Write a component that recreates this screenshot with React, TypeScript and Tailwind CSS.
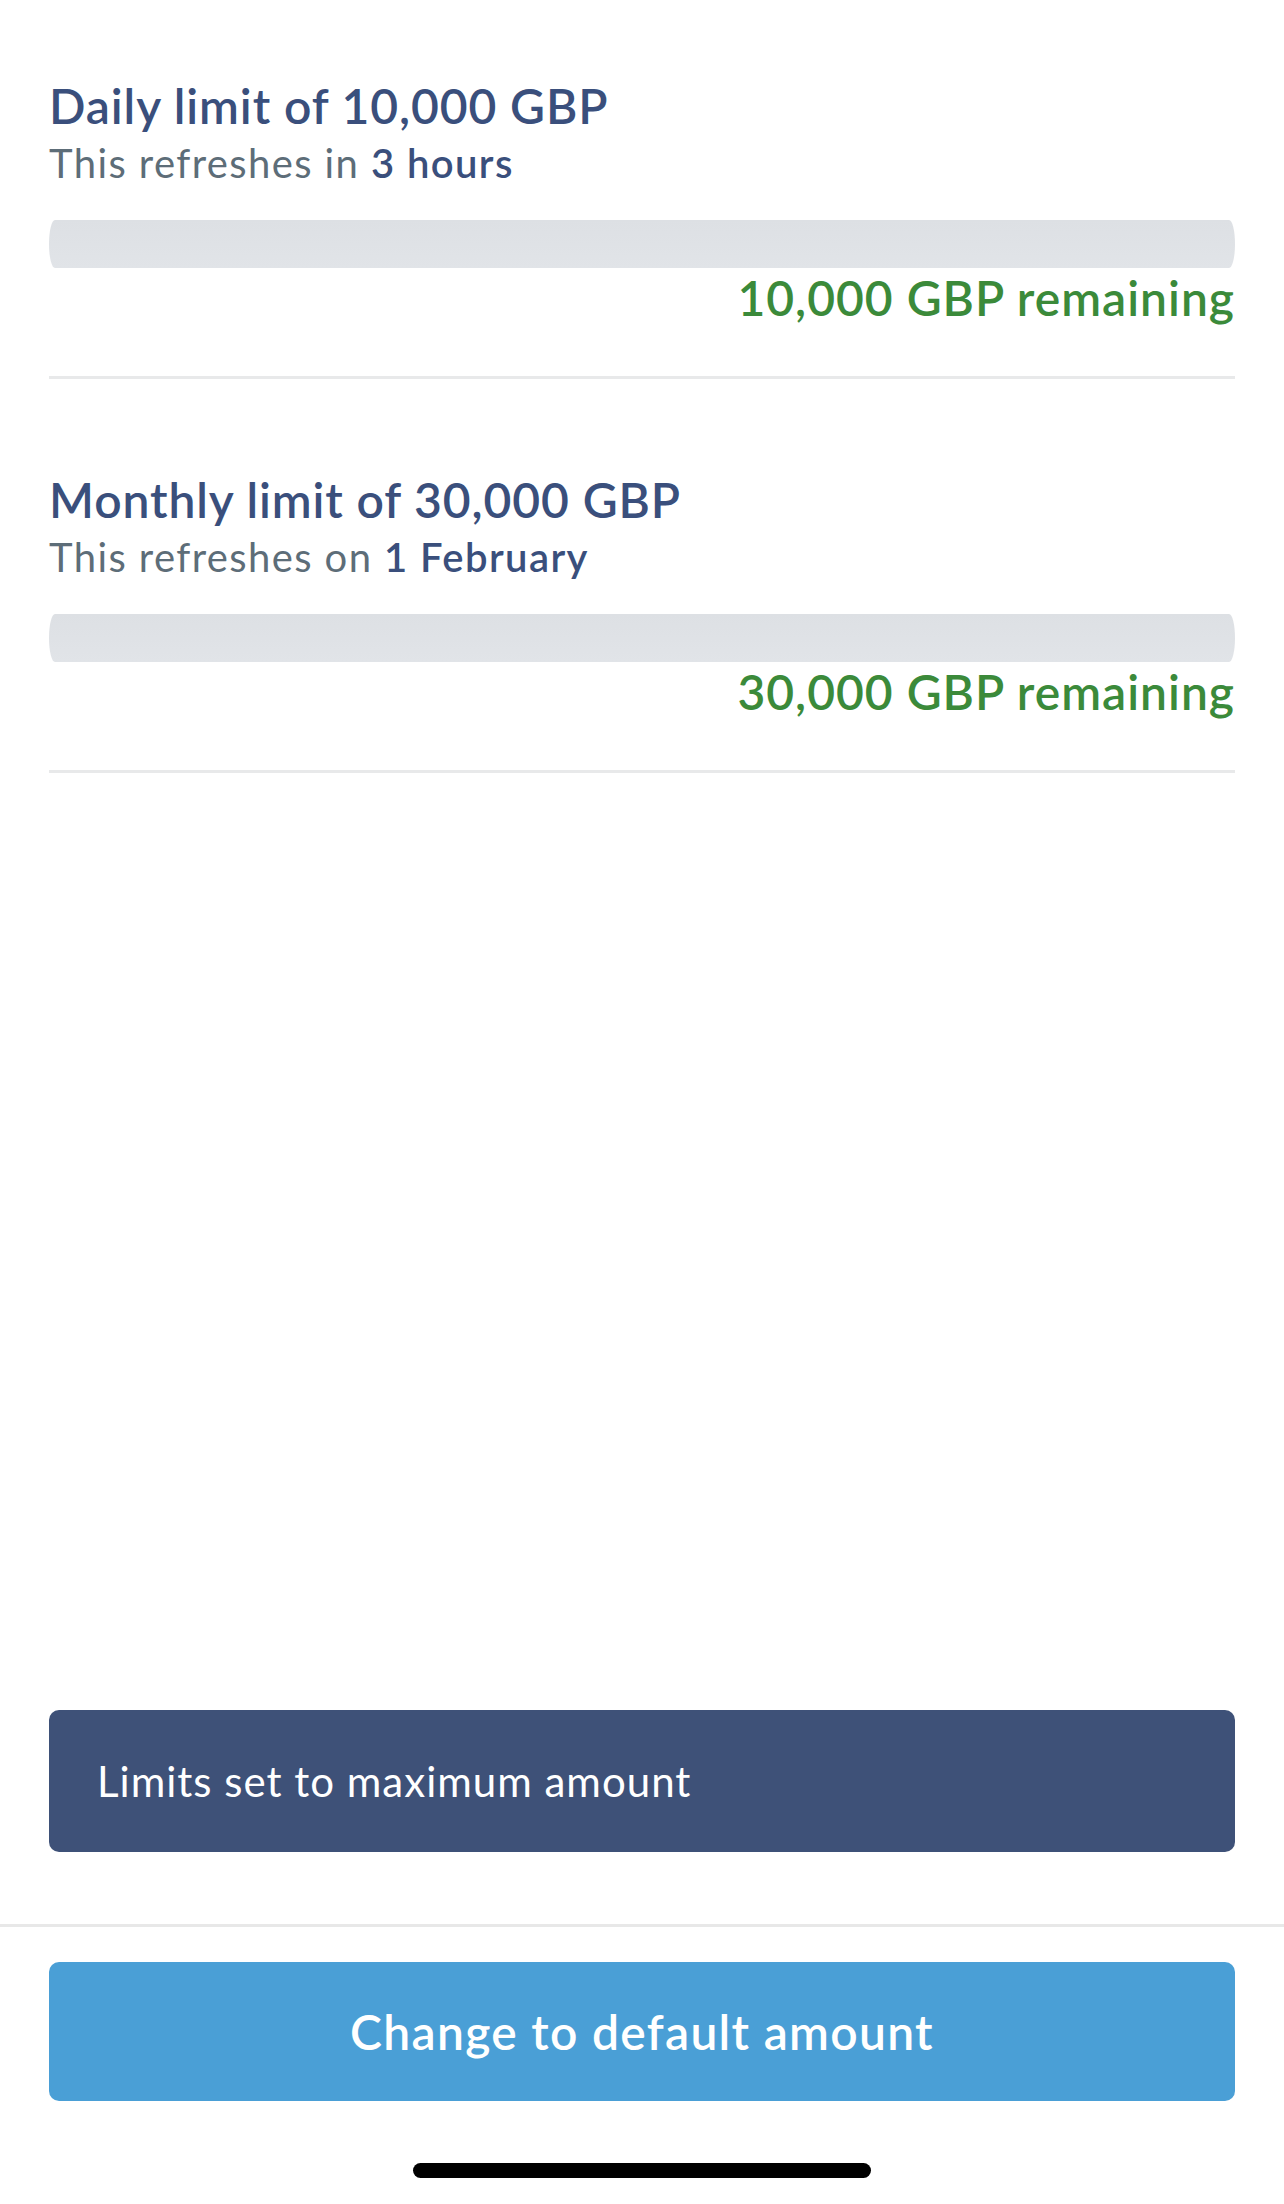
const limits = [
  {
    title: 'Daily limit of 10,000 GBP',
    refreshLabel: 'This refreshes in',
    refreshValue: '3 hours',
    remaining: '10,000 GBP remaining',
    used: 0,
    top: 'pt-[78px]',
  },
  {
    title: 'Monthly limit of 30,000 GBP',
    refreshLabel: 'This refreshes on',
    refreshValue: '1 February',
    remaining: '30,000 GBP remaining',
    used: 0,
    top: 'pt-[93px]',
  },
];

const LimitSection = ({ item }: { item: (typeof limits)[number] }) => (
  <div className={`${item.top} border-b-[3px] border-[#e8e9ea]`}>
    <h2 className="text-[48px] leading-[56px] font-semibold tracking-[0.9px] text-[#3a4f7c]">{item.title}</h2>
    <p className="mt-[6px] text-[40px] leading-[46px] tracking-[1.4px] text-[#5d6d78]">
      {item.refreshLabel} <span className="font-semibold text-[#3a4f7c]">{item.refreshValue}</span>
    </p>
    <div className="mt-[34px] h-[48px] rounded-[6px_/_24px] bg-gradient-to-b from-[#dde0e4] to-[#e1e4e8] overflow-hidden">
      <div className="h-full bg-[#3b8a3a]" style={{ width: `${item.used}%` }} />
    </div>
    <div className="mt-[2px] mb-[50px] text-right text-[48px] leading-[56px] font-semibold tracking-[1px] text-[#3b8a3a]">
      {item.remaining}
    </div>
  </div>
);

export default function App() {
  return (
    <div
      className="h-[2204px] w-[1284px] bg-white flex flex-col overflow-hidden"
      style={{ fontFamily: 'Lato, "Noto Sans", sans-serif' }}
    >
      <div className="px-[49px]">
        {limits.map((item) => (
          <LimitSection key={item.title} item={item} />
        ))}
      </div>

      <div className="flex-1" />

      <div className="px-[49px]">
        <div className="h-[142px] rounded-[10px] bg-[#3e5178] flex items-center px-[48px]">
          <span className="text-[42px] leading-[50px] tracking-[1px] text-white">Limits set to maximum amount</span>
        </div>
      </div>

      <div className="mt-[72px] border-t-[3px] border-[#e8e8e8] px-[49px] pt-[35px]">
        <button className="w-full h-[139px] rounded-[10px] bg-[#4a9fd6] text-white text-[48px] leading-[56px] font-semibold tracking-[1.3px]">
          Change to default amount
        </button>
        <div className="mt-[62px] mb-[26px] flex justify-center">
          <div className="h-[15px] w-[458px] rounded-full bg-black" />
        </div>
      </div>
    </div>
  );
}
